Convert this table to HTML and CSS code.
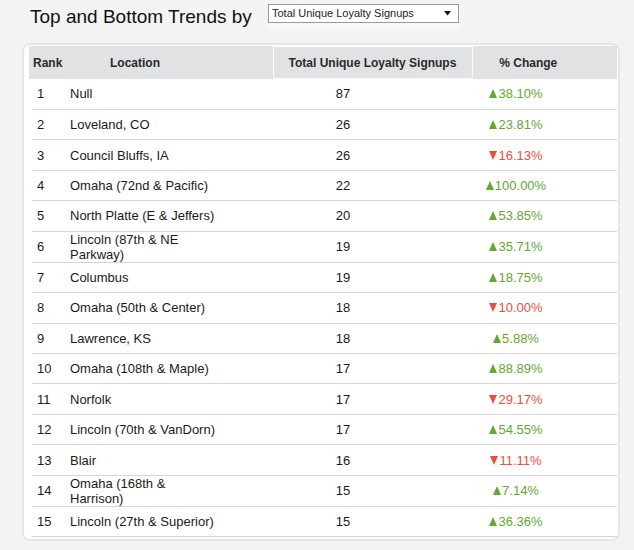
FILE: index.html
```html
<!DOCTYPE html>
<html lang="en">
<head>
<meta charset="utf-8">
<title>Top and Bottom Trends</title>
<link rel="stylesheet" href="styles.css">
</head>
<body>
<div class="topbar">
  <h1 class="title">Top and Bottom Trends by</h1>
  <div class="select-wrap">
    <div class="select">
      <span class="select-text">Total Unique Loyalty Signups</span>
      <svg class="select-arrow" width="7" height="5" viewBox="0 0 7 5"><path d="M0 0 H7 L3.5 4.5 Z" fill="#111"/></svg>
    </div>
  </div>
</div>
<div class="card">
  <table class="head">
    <colgroup><col class="h-rank"><col class="h-loc"><col class="h-total"><col class="h-chg"></colgroup>
    <thead>
      <tr>
        <th class="th-rank">Rank</th>
        <th class="th-loc">Location</th>
        <th class="th-total">Total Unique Loyalty Signups</th>
        <th class="th-chg">% Change</th>
      </tr>
    </thead>
  </table>
  <table class="body">
    <colgroup><col class="b-rank"><col class="b-loc"><col class="b-total"><col class="b-chg"></colgroup>
    <tbody>
      <tr><td class="rank">1</td><td class="loc">Null</td><td class="total">87</td><td class="chg up"><span class="tri"></span>38.10%</td></tr>
      <tr><td class="rank">2</td><td class="loc">Loveland, CO</td><td class="total">26</td><td class="chg up"><span class="tri"></span>23.81%</td></tr>
      <tr><td class="rank">3</td><td class="loc">Council Bluffs, IA</td><td class="total">26</td><td class="chg down"><span class="tri"></span>16.13%</td></tr>
      <tr><td class="rank">4</td><td class="loc">Omaha (72nd &amp; Pacific)</td><td class="total">22</td><td class="chg up"><span class="tri"></span>100.00%</td></tr>
      <tr><td class="rank">5</td><td class="loc nowrap">North Platte (E &amp; Jeffers)</td><td class="total">20</td><td class="chg up"><span class="tri"></span>53.85%</td></tr>
      <tr><td class="rank">6</td><td class="loc">Lincoln (87th &amp; NE Parkway)</td><td class="total">19</td><td class="chg up"><span class="tri"></span>35.71%</td></tr>
      <tr><td class="rank">7</td><td class="loc">Columbus</td><td class="total">19</td><td class="chg up"><span class="tri"></span>18.75%</td></tr>
      <tr><td class="rank">8</td><td class="loc">Omaha (50th &amp; Center)</td><td class="total">18</td><td class="chg down"><span class="tri"></span>10.00%</td></tr>
      <tr><td class="rank">9</td><td class="loc">Lawrence, KS</td><td class="total">18</td><td class="chg up"><span class="tri"></span>5.88%</td></tr>
      <tr><td class="rank">10</td><td class="loc">Omaha (108th &amp; Maple)</td><td class="total">17</td><td class="chg up"><span class="tri"></span>88.89%</td></tr>
      <tr><td class="rank">11</td><td class="loc">Norfolk</td><td class="total">17</td><td class="chg down"><span class="tri"></span>29.17%</td></tr>
      <tr><td class="rank">12</td><td class="loc nowrap">Lincoln (70th &amp; VanDorn)</td><td class="total">17</td><td class="chg up"><span class="tri"></span>54.55%</td></tr>
      <tr><td class="rank">13</td><td class="loc">Blair</td><td class="total">16</td><td class="chg down"><span class="tri"></span>11.11%</td></tr>
      <tr><td class="rank">14</td><td class="loc">Omaha (168th &amp; Harrison)</td><td class="total">15</td><td class="chg up"><span class="tri"></span>7.14%</td></tr>
      <tr><td class="rank">15</td><td class="loc">Lincoln (27th &amp; Superior)</td><td class="total">15</td><td class="chg up"><span class="tri"></span>36.36%</td></tr>
    </tbody>
  </table>
</div>
</body>
</html>
```

FILE: styles.css
```css
html, body {
  margin: 0;
  padding: 0;
  background: #f3f3f3;
  font-family: "Liberation Sans", Arial, Helvetica, sans-serif;
  color: #1a1a1a;
}

.topbar {
  display: flex;
  align-items: flex-start;
  height: 43px;
  padding: 4px 0 0 30px;
  box-sizing: border-box;
}

.title {
  flex: 0 0 238px;
  margin: 2px 0 0 0;
  font-size: 19px;
  line-height: 22px;
  font-weight: normal;
  color: #111;
  white-space: nowrap;
}

.select-wrap {
  background: #f8f8f8;
  padding: 0 1px 7px 0;
}

.select {
  position: relative;
  width: 191px;
  height: 19px;
  box-sizing: border-box;
  border: 1px solid #9a9a9a;
  background: #fff;
  display: flex;
  align-items: center;
  padding-left: 3px;
}

.select-text {
  font-size: 11px;
  color: #222;
  line-height: 17px;
}

.select-arrow {
  position: absolute;
  right: 7px;
  top: 6px;
}

.card {
  margin-left: 22px;
  width: 598px;
  box-sizing: border-box;
  background: #fff;
  border: 2px solid #e6e6e6;
  border-radius: 8px;
  padding: 1px 1px 2px 5px;
}

table {
  border-collapse: collapse;
  table-layout: fixed;
  border-spacing: 0;
}

.head {
  width: 588px;
  background: #e1e2e4;
}

.h-rank { width: 37px; }
.h-loc { width: 207px; }
.h-total { width: 199px; }
.h-chg { width: 145px; }

.head th {
  height: 32px;
  padding: 0;
  font-size: 12px;
  font-weight: bold;
  color: #2a2a2a;
  text-align: left;
  box-sizing: border-box;
}

.th-rank { padding-left: 4px !important; }
.th-loc { padding-left: 44px !important; }
.th-total {
  text-align: center !important;
  border: 1px solid #fafafa;
}
.th-chg {
  text-align: center !important;
  padding-right: 33px !important;
}

.body {
  width: 585px;
  margin-left: 3px;
}

.b-rank { width: 34px; }
.b-loc { width: 154px; }
.b-total { width: 246px; }
.b-chg { width: 151px; }

.body td {
  height: 30.45px;
  box-sizing: border-box;
  padding: 0;
  border-bottom: 1px solid #d5d5d5;
  font-size: 13px;
  line-height: 15px;
  vertical-align: middle;
}

.rank { padding-left: 5px !important; }

.loc {
  padding: 0 5px 0 4px !important;
  overflow: hidden;
}

.loc.nowrap {
  white-space: nowrap;
  text-overflow: clip;
}

.total { text-align: center; }

.chg {
  text-align: center;
  padding-right: 51px !important;
}

.tri {
  display: inline-block;
  width: 0;
  height: 0;
  margin-right: 1px;
  border-left: 4.5px solid transparent;
  border-right: 4.5px solid transparent;
}

.up { color: #62a832; }
.up .tri { border-bottom: 9px solid currentColor; }

.down { color: #e8503d; }
.down .tri { border-top: 9px solid currentColor; }
```
